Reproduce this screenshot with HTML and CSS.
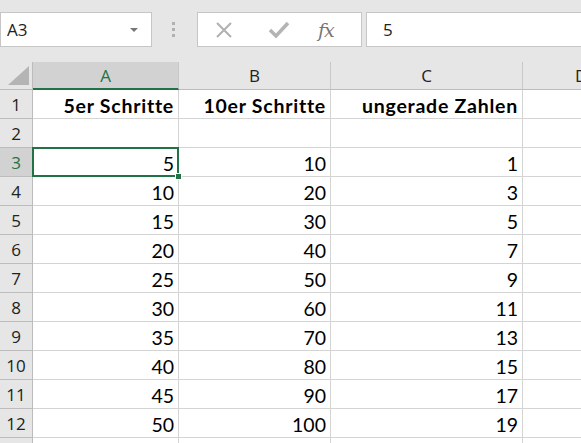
FILE: index.html
```html
<!DOCTYPE html>
<html>
<head>
<meta charset="utf-8">
<link rel="stylesheet" href="styles.css">
</head>
<body>
<div class="toolbar">
  <div class="namebox"><span class="nb-text">A3</span><span class="nb-arrow"></span></div>
  <div class="dots"><i></i><i></i><i></i></div>
  <div class="fxbox">
    <svg class="ic-x" width="20" height="20" viewBox="0 0 20 20"><path d="M3 3 L17 17 M17 3 L3 17" stroke="#b0b0b0" stroke-width="2" fill="none"/></svg>
    <svg class="ic-check" width="22" height="20" viewBox="0 0 22 20"><path d="M2 10 L8 16 L20 3" stroke="#b4b4b4" stroke-width="3.5" fill="none"/></svg>
    <span class="fx">fx</span>
  </div>
  <div class="formula">5</div>
</div>
<div class="grid">
  <div class="hd corner"><span class="tri"></span></div>
  <div class="hd col sel">A</div>
  <div class="hd col">B</div>
  <div class="hd col">C</div>
  <div class="hd col d">D</div>

  <div class="hd row">1</div><div class="c b">5er Schritte</div><div class="c b">10er Schritte</div><div class="c b">ungerade Zahlen</div><div class="c"></div>
  <div class="hd row">2</div><div class="c"></div><div class="c"></div><div class="c"></div><div class="c"></div>
  <div class="hd row sel">3</div><div class="c active">5<span class="handle"></span></div><div class="c">10</div><div class="c">1</div><div class="c"></div>
  <div class="hd row">4</div><div class="c">10</div><div class="c">20</div><div class="c">3</div><div class="c"></div>
  <div class="hd row">5</div><div class="c">15</div><div class="c">30</div><div class="c">5</div><div class="c"></div>
  <div class="hd row">6</div><div class="c">20</div><div class="c">40</div><div class="c">7</div><div class="c"></div>
  <div class="hd row">7</div><div class="c">25</div><div class="c">50</div><div class="c">9</div><div class="c"></div>
  <div class="hd row">8</div><div class="c">30</div><div class="c">60</div><div class="c">11</div><div class="c"></div>
  <div class="hd row">9</div><div class="c">35</div><div class="c">70</div><div class="c">13</div><div class="c"></div>
  <div class="hd row">10</div><div class="c">40</div><div class="c">80</div><div class="c">15</div><div class="c"></div>
  <div class="hd row">11</div><div class="c">45</div><div class="c">90</div><div class="c">17</div><div class="c"></div>
  <div class="hd row">12</div><div class="c">50</div><div class="c">100</div><div class="c">19</div><div class="c"></div>
  <div class="hd row"></div><div class="c"></div><div class="c"></div><div class="c"></div><div class="c"></div>
</div>
</body>
</html>
```
FILE: styles.css
```css
* { box-sizing: border-box; }
html, body { margin: 0; padding: 0; overflow: hidden; }
body { width: 581px; height: 443px; background: #fff; font-family: "Lato", "Open Sans", sans-serif; }

.toolbar {
  height: 62px;
  background: #e6e6e6;
  display: flex;
  align-items: flex-start;
  padding-top: 12px;
}
.namebox {
  width: 152px; height: 35px;
  background: #fff;
  border: 1px solid #c6c6c6;
  display: flex; align-items: center; justify-content: space-between;
  padding: 0 13px 0 6px;
  font-family: "Open Sans", "Noto Sans", sans-serif;
  font-size: 17px; color: #222;
}
.nb-arrow {
  width: 0; height: 0;
  border-left: 4px solid transparent;
  border-right: 4px solid transparent;
  border-top: 4px solid #777;
  margin-top: 1px;
}
.dots {
  width: 45px; height: 35px;
  display: flex; flex-direction: column; align-items: center; justify-content: center; gap: 3px;
  padding-right: 3px;
}
.dots i { display: block; width: 3px; height: 3px; background: #b0b0b0; }
.fxbox {
  width: 165px; height: 35px;
  background: #fff;
  border: 1px solid #c6c6c6;
  display: flex; align-items: center;
  padding-left: 16px;
}
.ic-x { margin-right: 34px; }
.ic-check { margin-right: 28px; }
.fx {
  font-family: "DejaVu Serif", "Liberation Serif", serif;
  font-style: italic; font-size: 19px; color: #767676;
  letter-spacing: -1px;
}
.formula {
  flex: 1; height: 35px; margin-left: 4px;
  background: #fff;
  border: 1px solid #c6c6c6;
  border-right: none;
  display: flex; align-items: center;
  padding-left: 16px;
  font-family: "Open Sans", "Noto Sans", sans-serif;
  font-size: 17px; color: #222;
}

.grid {
  display: grid;
  grid-template-columns: 33px 146px 152px 192px 1fr;
  grid-template-rows: 28px repeat(13, 29px);
}
.hd {
  background: #e6e6e6;
  color: #222;
  font-family: "Open Sans", "Noto Sans", sans-serif;
  font-size: 17px;
  display: flex; align-items: center; justify-content: center;
  border-right: 1px solid #bcbcbc;
  border-bottom: 1px solid #bcbcbc;
}
.hd.col { border-right-color: #c8c8c8; }
.hd.d { justify-content: flex-start; padding-left: 52px; }
.corner { position: relative; }
.tri {
  position: absolute; right: 3px; bottom: 4px;
  width: 0; height: 0;
  border-left: 21px solid transparent;
  border-bottom: 19px solid #b4b4b4;
}
.hd.sel { background: #d2d2d2; color: #217346; }
.hd.col.sel { border-bottom: 2px solid #217346; }
.hd.row { padding-top: 1px; }
.c {
  font-family: "Lato", sans-serif;
  font-size: 19.5px; color: #000;
  display: flex; align-items: center; justify-content: flex-end;
  padding: 2px 4px 0 0;
  border-right: 1px solid #d4d4d4;
  border-bottom: 1px solid #d4d4d4;
  white-space: nowrap;
}
.c.b { font-weight: bold; letter-spacing: 0.75px; }
.c.active { position: relative; }
.c.active::after {
  content: ""; position: absolute;
  left: -1px; top: -1px; right: -1px; bottom: -1px;
  border: 2px solid #217346;
}
.handle {
  position: absolute; right: -4px; bottom: -4px;
  width: 7px; height: 7px;
  background: #217346;
  border: 1px solid #fff;
  z-index: 2;
}
```
